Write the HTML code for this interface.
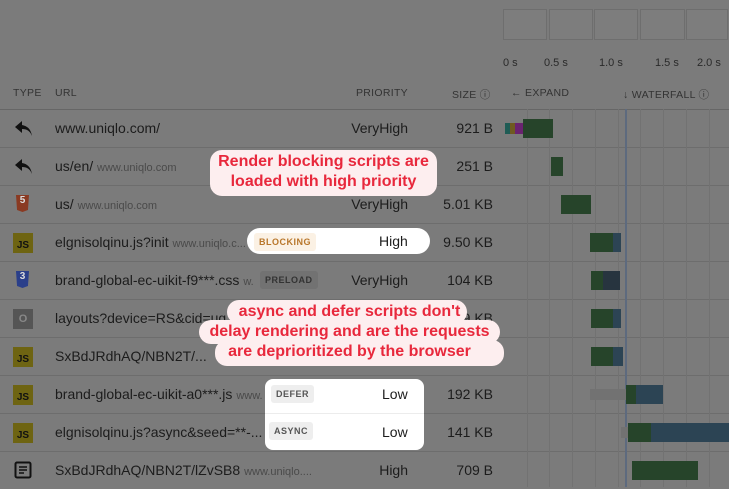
<!DOCTYPE html>
<html><head><style>
body{margin:0;width:729px;height:487px;background:#7b7b7b;font-family:"Liberation Sans",sans-serif;position:relative;overflow:hidden;color:#1c1c1c}
.a{position:absolute}
.fs{position:absolute;top:9px;height:29px;border:1px solid #6e6e6e;background:#7d7d7d}
.t{position:absolute;top:57px;font-size:11px;color:#2a2a2a}
.h{position:absolute;top:87px;font-size:10.5px;color:#333;letter-spacing:.3px}
.line{position:absolute;left:0;width:729px;height:1px;background:#6d6d6d}
.vl{position:absolute;top:109px;bottom:0;width:1px;background:#727272}
.row{position:absolute;left:0;width:729px;height:38px;font-size:14px}
.row .u{position:absolute;left:55px;top:11px;white-space:nowrap}
.row .u small{font-size:11px;color:#4a4a4a}
.row .p{position:absolute;right:321px;top:11px}
.row .s{position:absolute;right:236px;top:11px}
.js{position:absolute;left:13px;top:10px;width:20px;height:20px;background:#6e6412;color:#111;font-size:10px;font-weight:bold;text-align:center;line-height:26px}
.bar{position:absolute;height:19px}
.g{background:#26442a}.b{background:#2c4454}
.bub{position:absolute;background:#fdeeef;color:#e8283c;font-weight:bold;font-size:16px;text-align:center;border-radius:12px;line-height:20px}
.tag{position:absolute;font-size:9px;font-weight:bold;letter-spacing:.5px;padding:4px 5px;border-radius:3px}
</style></head><body>
<div class="fs" style="left:503px;width:42px"></div>
<div class="fs" style="left:549px;width:42px"></div>
<div class="fs" style="left:594px;width:42px"></div>
<div class="fs" style="left:640px;width:43px"></div>
<div class="fs" style="left:686px;width:40px"></div>
<div class="t" style="left:503px">0 s</div><div class="t" style="left:544px">0.5 s</div><div class="t" style="left:599px">1.0 s</div><div class="t" style="left:655px">1.5 s</div><div class="t" style="left:697px">2.0 s</div>
<div class="h" style="left:13px">TYPE</div><div class="h" style="left:55px">URL</div><div class="h" style="left:356px">PRIORITY</div><div class="h" style="left:452px">SIZE ⓘ</div><div class="h" style="left:511px">← EXPAND</div><div class="h" style="left:623px">↓ WATERFALL ⓘ</div>
<div class="line" style="top:109px;background:#666"></div>
<div class="line" style="top:147px"></div><div class="line" style="top:185px"></div><div class="line" style="top:223px"></div><div class="line" style="top:261px"></div><div class="line" style="top:299px"></div><div class="line" style="top:337px"></div><div class="line" style="top:375px"></div><div class="line" style="top:413px"></div><div class="line" style="top:451px"></div>
<div class="vl" style="left:527px"></div><div class="vl" style="left:549px"></div><div class="vl" style="left:572px"></div><div class="vl" style="left:595px"></div><div class="vl" style="left:618px"></div><div class="vl" style="left:640px"></div><div class="vl" style="left:663px"></div><div class="vl" style="left:686px"></div><div class="vl" style="left:709px"></div>
<div class="vl" style="left:625px;width:2px;background:#5d6a7e"></div>

<div class="row" style="top:109px"><svg class="a" style="left:14px;top:10px" width="20" height="20" viewBox="0 0 20 20"><path d="M8 2 L1 8 L8 14 V10 C13 10 16 12 18 17 C17 11 14 7 8 6 Z" fill="#111"/></svg><div class="u">www.uniqlo.com/</div><div class="p">VeryHigh</div><div class="s">921 B</div></div>
<div class="row" style="top:147px"><svg class="a" style="left:14px;top:10px" width="20" height="20" viewBox="0 0 20 20"><path d="M8 2 L1 8 L8 14 V10 C13 10 16 12 18 17 C17 11 14 7 8 6 Z" fill="#111"/></svg><div class="u">us/en/ <small>www.uniqlo.com</small></div><div class="s">251 B</div></div>
<div class="row" style="top:185px"><div class="a" style="left:16px;top:10px;width:13px;height:17px;background:#8a3a22;color:#ddd;font-size:10px;text-align:center;font-weight:bold;clip-path:polygon(0 0,100% 0,92% 88%,50% 100%,8% 88%)">5</div><div class="u">us/ <small>www.uniqlo.com</small></div><div class="p">VeryHigh</div><div class="s">5.01 KB</div></div>
<div class="row" style="top:223px"><div class="js">JS</div><div class="u">elgnisolqinu.js?init <small>www.uniqlo.c...</small></div><div class="s">9.50 KB</div></div>
<div class="row" style="top:261px"><div class="a" style="left:16px;top:10px;width:13px;height:17px;background:#2a3f8a;color:#ddd;font-size:10px;text-align:center;font-weight:bold;clip-path:polygon(0 0,100% 0,92% 88%,50% 100%,8% 88%)">3</div><div class="u">brand-global-ec-uikit-f9***.css <small>w.</small></div><div class="tag" style="left:260px;top:10px;background:#727272;color:#333">PRELOAD</div><div class="p">VeryHigh</div><div class="s">104 KB</div></div>
<div class="row" style="top:299px"><div class="a" style="left:13px;top:10px;width:20px;height:20px;background:#555;color:#888;font-size:11px;text-align:center;line-height:20px;font-weight:bold">O</div><div class="u">layouts?device=RS&amp;cid=ug</div><div class="s">9 KB</div></div>
<div class="row" style="top:337px"><div class="js">JS</div><div class="u">SxBdJRdhAQ/NBN2T/...</div><div class="s">KB</div></div>
<div class="row" style="top:375px"><div class="js">JS</div><div class="u">brand-global-ec-uikit-a0***.js <small>www.</small></div><div class="s">192 KB</div></div>
<div class="row" style="top:413px"><div class="js">JS</div><div class="u">elgnisolqinu.js?async&amp;seed=**-...</div><div class="s">141 KB</div></div>
<div class="row" style="top:451px"><svg class="a" style="left:13px;top:9px" width="20" height="20" viewBox="0 0 20 20"><rect x="2.5" y="2.5" width="15" height="15" rx="1.5" fill="none" stroke="#111" stroke-width="2"/><path d="M6 7h8M6 10h8M6 13h5" stroke="#111" stroke-width="1.6"/></svg><div class="u">SxBdJRdhAQ/NBN2T/lZvSB8 <small>www.uniqlo....</small></div><div class="p">High</div><div class="s">709 B</div></div>

<div class="bar" style="left:505px;top:123px;width:5px;height:11px;background:#1f5c55"></div><div class="bar" style="left:510px;top:123px;width:5px;height:11px;background:#6f5a20"></div><div class="bar" style="left:515px;top:123px;width:8px;height:11px;background:#6a2370"></div>
<div class="bar g" style="left:523px;top:119px;width:30px"></div>
<div class="bar g" style="left:551px;top:157px;width:12px"></div>
<div class="bar g" style="left:561px;top:195px;width:30px"></div>
<div class="bar g" style="left:590px;top:233px;width:23px"></div><div class="bar b" style="left:613px;top:233px;width:8px"></div>
<div class="bar g" style="left:591px;top:271px;width:12px"></div><div class="bar b" style="left:603px;top:271px;width:17px;background:#27343f"></div>
<div class="bar g" style="left:591px;top:309px;width:22px"></div><div class="bar b" style="left:613px;top:309px;width:8px"></div>
<div class="bar g" style="left:591px;top:347px;width:22px"></div><div class="bar b" style="left:613px;top:347px;width:10px"></div>
<div class="bar" style="left:590px;top:389px;width:36px;height:11px;background:#727272"></div><div class="bar g" style="left:626px;top:385px;width:10px"></div><div class="bar b" style="left:636px;top:385px;width:27px"></div>
<div class="bar" style="left:621px;top:427px;width:7px;height:11px;background:#727272"></div><div class="bar g" style="left:628px;top:423px;width:23px"></div><div class="bar b" style="left:651px;top:423px;width:78px"></div>
<div class="bar g" style="left:632px;top:461px;width:66px"></div>

<div class="bub" style="left:210px;top:150px;width:227px;height:44px;padding-top:2px">Render blocking scripts are<br>loaded with high priority</div>
<div class="a" style="left:247px;top:228px;width:183px;height:26px;background:#fff;border-radius:13px;font-size:14px"><div class="tag" style="left:7px;top:5px;background:#fbf1e4;color:#b8762a">BLOCKING</div><div class="a" style="left:132px;top:5px">High</div></div>
<div class="bub" style="left:227px;top:300px;width:240px;height:24px"></div>
<div class="bub" style="left:199px;top:320px;width:301px;height:24px"></div>
<div class="bub" style="left:215px;top:340px;width:289px;height:26px"></div>
<div class="a" style="left:199px;top:302px;width:301px;color:#e8283c;font-weight:bold;font-size:16px;text-align:center;line-height:20px">async and defer scripts don't<br>delay rendering and are the requests<br>are deprioritized by the browser</div>
<div class="a" style="left:265px;top:379px;width:159px;height:71px;background:#fff;border-radius:8px;font-size:14px">
<div class="tag" style="left:6px;top:6px;background:#eee;color:#555">DEFER</div><div class="a" style="left:117px;top:7px">Low</div>
<div class="a" style="left:0;top:34px;width:159px;height:1px;background:#ececec"></div>
<div class="tag" style="left:4px;top:43px;background:#eee;color:#555">ASYNC</div><div class="a" style="left:117px;top:45px">Low</div></div>
</body></html>
